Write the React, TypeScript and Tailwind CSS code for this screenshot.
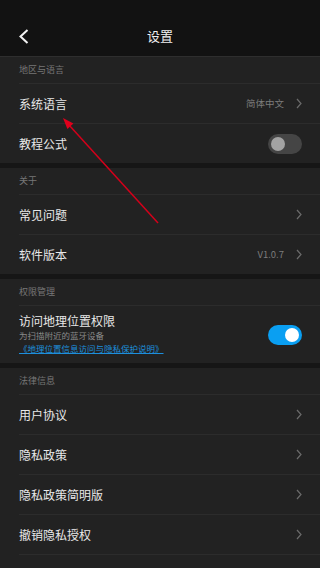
import React from 'react'

type Row = { label: string; value?: string; toggle?: boolean }

const font = { fontFamily: '"Noto Sans CJK SC", "Noto Sans", sans-serif' }

function Chevron() {
  return (
    <svg width="6" height="11" viewBox="0 0 6 11" className="shrink-0">
      <polyline points="1,1 5,5.5 1,10" fill="none" stroke="#6b6b6b" strokeWidth="1.2" />
    </svg>
  )
}

function Toggle({ on }: { on: boolean }) {
  return on ? (
    <div className="w-[34px] h-[20px] rounded-full bg-[#0a9ff2] flex items-center justify-end px-[3px] shrink-0">
      <div className="w-[14px] h-[14px] rounded-full bg-white" />
    </div>
  ) : (
    <div className="w-[34px] h-[20px] rounded-full bg-[#454545] flex items-center px-[3px] shrink-0">
      <div className="w-[14px] h-[14px] rounded-full bg-[#a3a3a3]" />
    </div>
  )
}

function SectionTitle({ title }: { title: string }) {
  return (
    <div className="h-[26px] flex items-center pl-[19px] text-[9px] text-[#777777]">{title}</div>
  )
}

function ListRow({ row }: { row: Row }) {
  return (
    <div className="ml-[19px] border-t border-[#2c2c2c] h-[40px] flex items-center pr-[18px]">
      <span className="text-[12px] text-[#e8e8e8] flex-1">{row.label}</span>
      {row.toggle ? (
        <Toggle on={false} />
      ) : (
        <div className="flex items-center gap-[12px]">
          {row.value && <span className="text-[9.5px] text-[#7c7c7c]">{row.value}</span>}
          <Chevron />
        </div>
      )}
    </div>
  )
}

function Section({ title, rows }: { title: string; rows: Row[] }) {
  return (
    <div className="bg-[#222222]">
      <SectionTitle title={title} />
      {rows.map((r) => (
        <ListRow key={r.label} row={r} />
      ))}
    </div>
  )
}

export default function App() {
  return (
    <div className="relative w-[320px] h-[568px] overflow-hidden bg-[#161616]" style={font}>
      <div className="h-[56px] bg-[#121212] flex items-center pt-[16px] relative">
        <svg width="12" height="16" viewBox="0 0 12 16" className="absolute left-[18px] top-[29px]">
          <polyline points="9.5,1 2.5,7.5 9.5,14" fill="none" stroke="#f2f2f2" strokeWidth="2" />
        </svg>
        <div className="flex-1 text-center text-[13px] text-[#f0f0f0]">设置</div>
      </div>
      <div className="h-px bg-[#2e2e2e]" />

      <Section
        title="地区与语言"
        rows={[
          { label: '系统语言', value: '简体中文' },
          { label: '教程公式', toggle: true },
        ]}
      />
      <div className="h-[5px]" />

      <Section
        title="关于"
        rows={[
          { label: '常见问题' },
          { label: '软件版本', value: 'V1.0.7' },
        ]}
      />
      <div className="h-[5px]" />

      <div className="bg-[#222222]">
        <SectionTitle title="权限管理" />
        <div className="ml-[19px] border-t border-[#2c2c2c] h-[58px] flex items-center pr-[18px]">
          <div className="flex-1 flex flex-col -mt-[3px]">
            <span className="text-[12px] leading-[16px] text-[#e8e8e8]">访问地理位置权限</span>
            <span className="text-[8.5px] leading-[13px] text-[#8a8a8a]">为扫描附近的蓝牙设备</span>
            <span className="text-[8.5px] leading-[12px] text-[#1d8fdc] underline self-start">
              《地理位置信息访问与隐私保护说明》
            </span>
          </div>
          <Toggle on />
        </div>
      </div>
      <div className="h-[5px]" />

      <Section
        title="法律信息"
        rows={[
          { label: '用户协议' },
          { label: '隐私政策' },
          { label: '隐私政策简明版' },
          { label: '撤销隐私授权' },
          { label: '智能家居信息收集说明' },
        ]}
      />

      <svg className="absolute left-0 top-0 pointer-events-none" width="320" height="568">
        <line x1="158" y1="223" x2="69" y2="125" stroke="#d4001a" strokeWidth="1.5" />
        <polygon points="63,118 73.4,123.5 67.4,128.9" fill="#e0001c" />
      </svg>
    </div>
  )
}
